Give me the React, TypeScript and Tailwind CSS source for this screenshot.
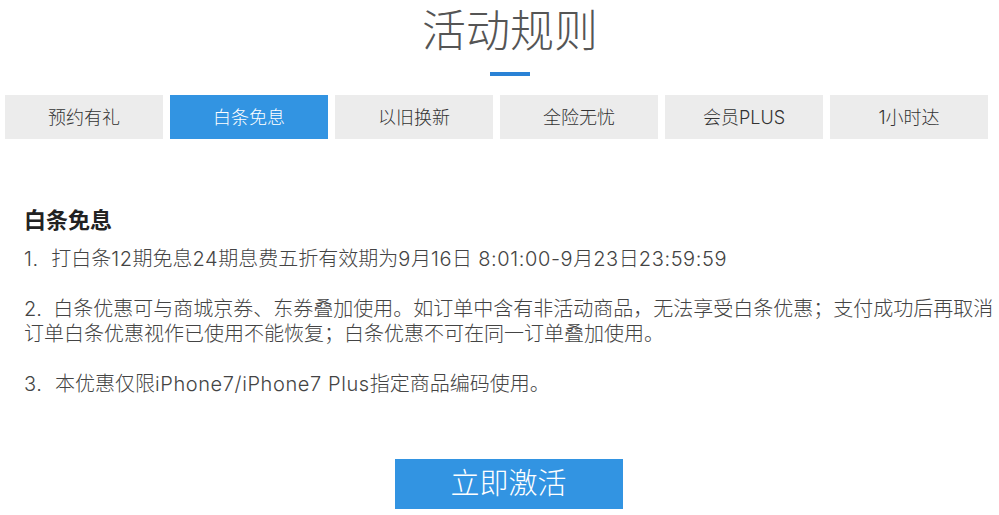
import React from "react";

const tabs = ["预约有礼", "白条免息", "以旧换新", "全险无忧", "会员PLUS", "1小时达"];

function T({ s }: { s: string }) {
  const parts = s.split(/([\x20-\x7e\u00a0]+)/).filter((p) => p.length > 0);
  return (
    <>
      {parts.map((p, i) =>
        /^[\x20-\x7e\u00a0]+$/.test(p) ? (
          <span key={i} className="tracking-[0.6px]">
            {p}
          </span>
        ) : (
          <React.Fragment key={i}>{p}</React.Fragment>
        )
      )}
    </>
  );
}

export default function App() {
  const font = { fontFamily: 'Inter, "Noto Sans CJK SC", sans-serif' };
  return (
    <div className="w-[999px] h-[515px] bg-white overflow-hidden" style={font}>
      <div className="pl-[21px] pt-[9px] text-center text-[44px] leading-[44px] font-light text-[#555]">活动规则</div>
      <div className="pl-[21px] mt-[19px] flex justify-center">
        <div className="w-[40px] h-[4px] bg-[#2a82d6]" />
      </div>
      <div className="mt-[19px] pl-[5px] flex gap-[7px]">
        {tabs.map((t, i) => (
          <div
            key={t}
            className={
              "w-[158px] h-[44px] flex items-center justify-center text-[18px] font-light " +
              (i === 1 ? "bg-[#3294e2] text-white" : "bg-[#ececec] text-[#333]")
            }
          >
            {t}
          </div>
        ))}
      </div>
      <div className="pl-[24px] mt-[66px]">
        <div className="text-[22px] leading-[30px] font-bold text-[#222]">白条免息</div>
        <div className="mt-[12px] text-[20px] leading-[25px] font-light text-[#444] whitespace-nowrap">
          <p>
            <T s={"1.\u00a0 打白条12期免息24期息费五折有效期为9月16日 8:01:00-9月23日23:59:59"} />
          </p>
          <p className="mt-[25px]">
            2.&nbsp; 白条优惠可与商城京券、东券叠加使用。如订单中含有非活动商品，无法享受白条优惠；支付成功后再取消
            <br />
            订单白条优惠视作已使用不能恢复；白条优惠不可在同一订单叠加使用。
          </p>
          <p className="mt-[25px]">
            <T s={"3.\u00a0 本优惠仅限iPhone7/iPhone7 Plus指定商品编码使用。"} />
          </p>
        </div>
      </div>
      <div className="pl-[18px] mt-[62px] flex justify-center">
        <div className="w-[228px] h-[50px] bg-[#3294e2] text-white text-[29px] font-light flex items-center justify-center">
          立即激活
        </div>
      </div>
    </div>
  );
}
